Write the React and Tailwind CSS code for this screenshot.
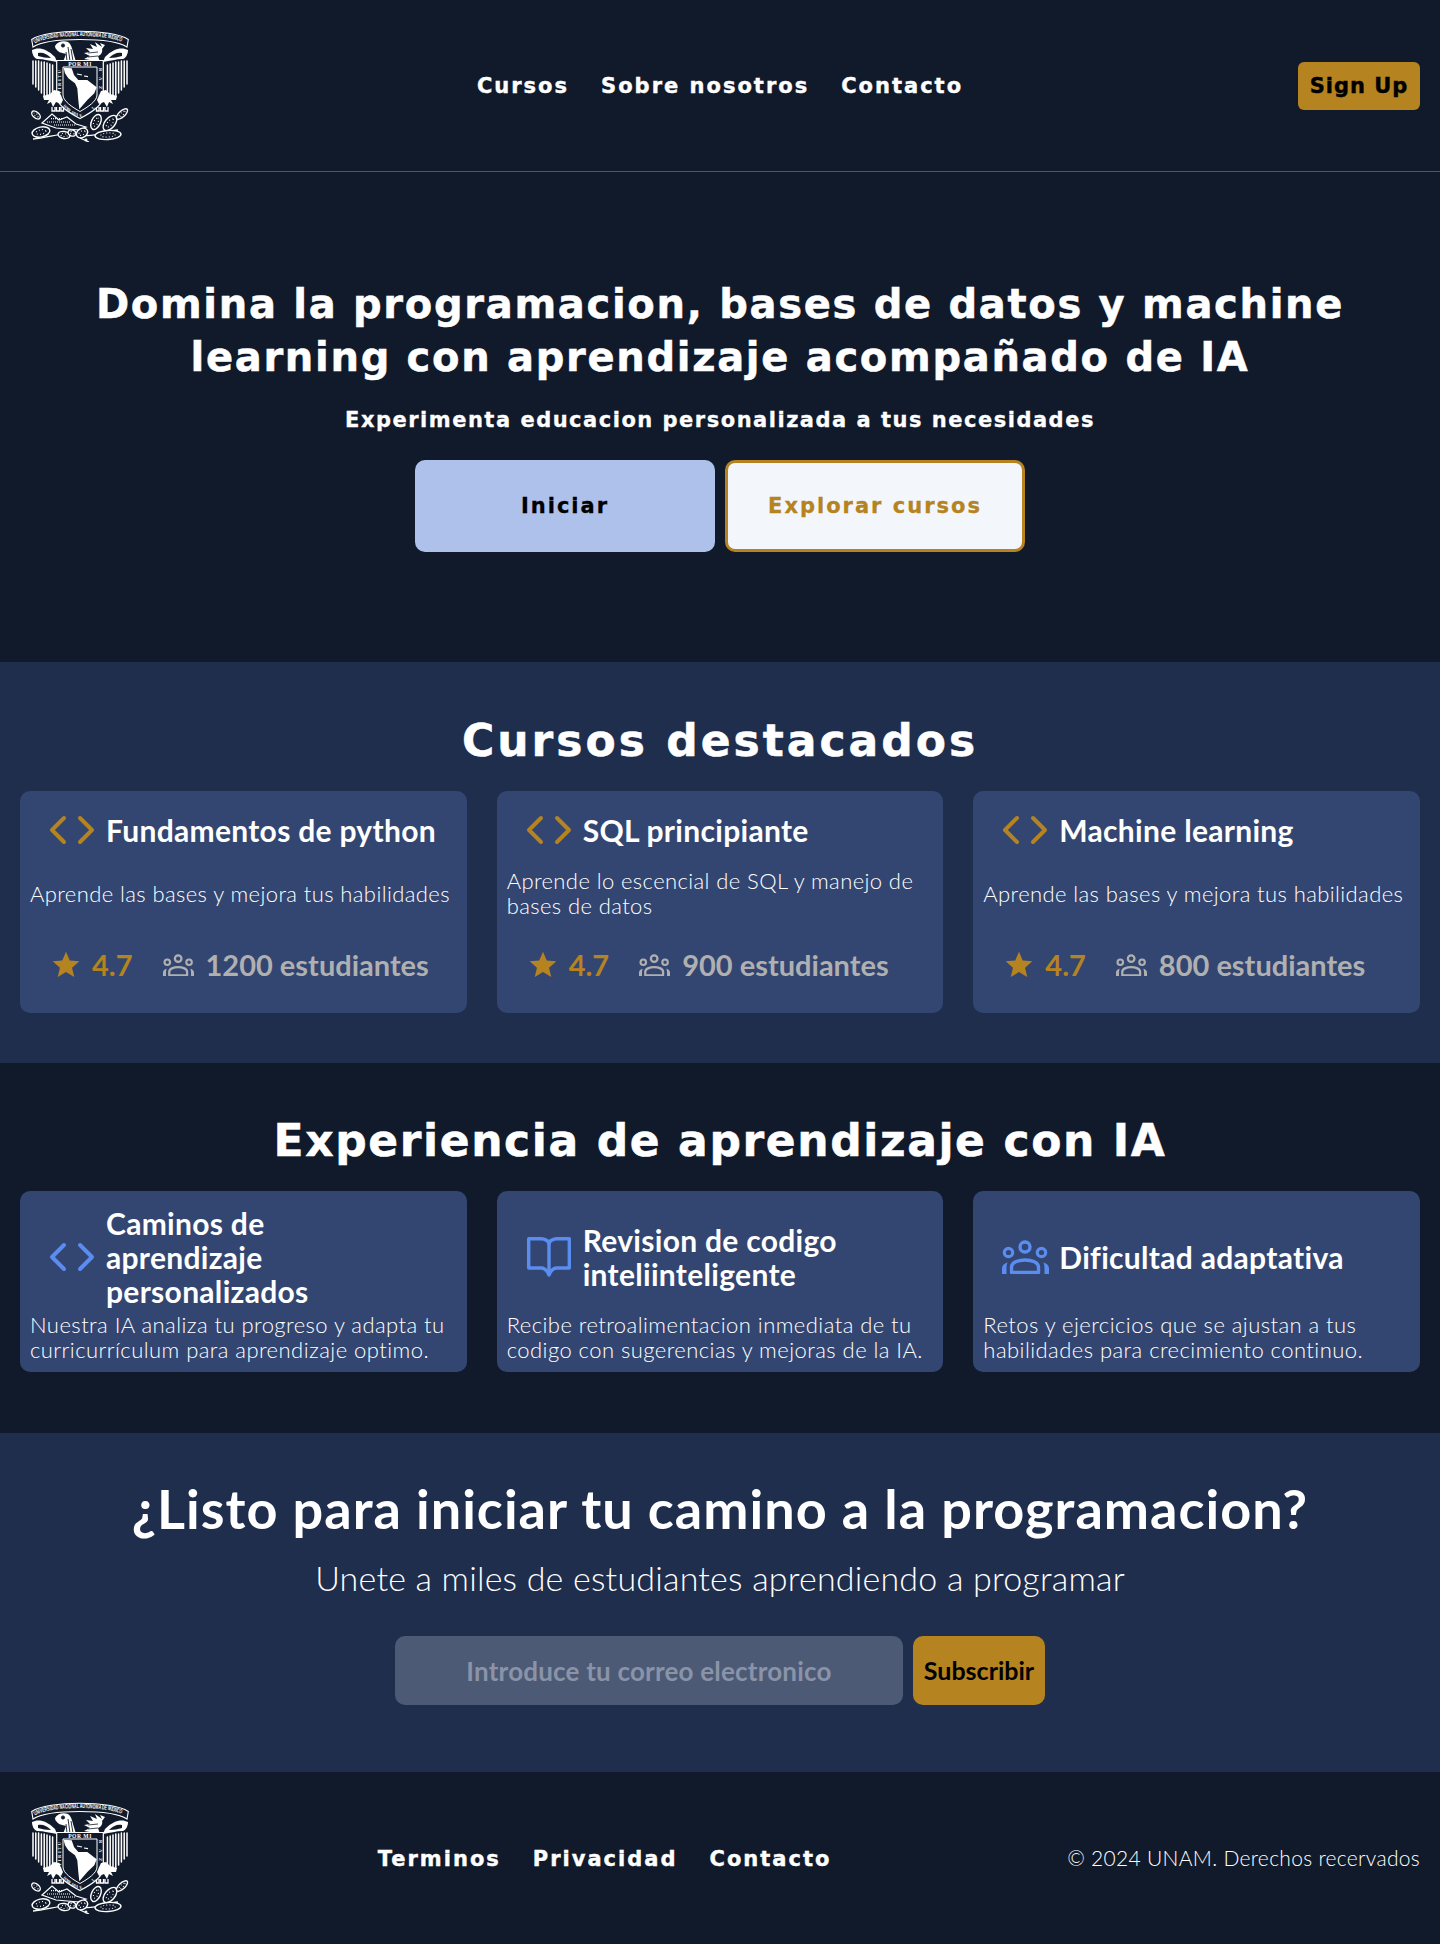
import React from "react";
import { Code } from "lucide-react";
import { MdStar } from "react-icons/md";

const HEAD = { fontFamily: '"DejaVu Sans", sans-serif' };
const BODY = { fontFamily: 'Lato, "Liberation Sans", sans-serif' };
const SERIF = '"Liberation Serif", serif';
const COND = '"Liberation Sans", sans-serif';

function Pad({ cx, cy, rx, ry, r = 0 }) {
  return (
    <g transform={`rotate(${r} ${cx} ${cy})`}>
      <ellipse cx={cx} cy={cy} rx={rx} ry={ry} stroke="#fff" strokeWidth="1.4" fill="#111a2a" />
      <ellipse cx={cx} cy={cy} rx={rx * 0.55} ry={ry * 0.45} stroke="#fff" strokeWidth="1.1" strokeDasharray="0.9 2.2" fill="none" />
    </g>
  );
}

function Crest({ id }) {
  return (
    <svg width="100" height="112" viewBox="0 0 100 112" fill="none" className="block">
      <defs>
        <path id={`arc-${id}`} d="M5 13.5C20 3.6 80 3.6 95 13.5" />
        <path id={`left-${id}`} d="M31 72V38" />
        <path id={`right-${id}`} d="M69 38V72" />
        <path id={`bl-${id}`} d="M33 76C38 82 44 85 50 87" />
        <path id={`br-${id}`} d="M50 87C56 85 62 82 67 76" />
      </defs>
      <path d="M1.7 9.5C18 -1.5 82 -1.5 98.3 9.5L97 17C82 7 18 7 3 17Z" stroke="#fff" strokeWidth="1.1" />
      <text fill="#fff" fontFamily={COND} fontSize="6.2" fontWeight="700">
        <textPath href={`#arc-${id}`} textLength="88" lengthAdjust="spacingAndGlyphs">UNIVERSIDAD NACIONAL AUTONOMA DE MEXICO</textPath>
      </text>

      <path d="M2 20C8 17 16 18 25 27L27 32C20 31 14 29 7 29C4 28 2 24 2 20Z" fill="#fff" />
      <path d="M98 20C92 17 84 18 75 27L73 32C80 31 86 29 93 29C96 28 98 24 98 20Z" fill="#fff" />
      <path d="M8 23C13 22 17 24 21 28C16 28 12 27 8 26Z" fill="#111a2a" />
      <path d="M92 23C87 22 83 24 79 28C84 28 88 27 92 26Z" fill="#111a2a" />

      <g stroke="#fff" strokeWidth="1.5" strokeLinecap="round">
        <path d="M3 31V54M5.8 31V57M8.6 31V60M11.4 32V63M14.2 32V66M17 33V68M19.8 34V68M22.6 35V64" />
        <path d="M97 31V54M94.2 31V57M91.4 31V60M88.6 32V63M85.8 32V66M83 33V68M80.2 34V68M77.4 35V64" />
      </g>

      <path d="M25 16C27 12 33 10 38 12C41 14 42 18 43 22L46 32H33L36 24C32 23 28 22 27 20C26 19 25 18 25 16Z" fill="#fff" />
      <g stroke="#111a2a" strokeWidth="0.9">
        <path d="M38 17L40 31M41 19L43 31M36 22L37 31" />
        <circle cx="33" cy="15.5" r="1.6" fill="#111a2a" />
      </g>
      <path d="M75 15L70 13L72 17L65 12L67 17L60 14L63 19L56 18L60 22L54 23L60 26L54 29L60 30L55 32H70L68 26C71 25 73 22 72 19Z" fill="#fff" />
      <g stroke="#111a2a" strokeWidth="0.8">
        <path d="M58 23L68 22M58 27L68 26" />
      </g>

      <path d="M26.7 30.5H73.3V66C73.3 75 62 82 50 88.5C38 82 26.7 75 26.7 66Z" fill="#111a2a" stroke="#fff" strokeWidth="1.2" />
      <path d="M33 37H67V65C67 71 58 77 50 81.5C42 77 33 71 33 65Z" fill="#111a2a" stroke="#fff" strokeWidth="1" />
      <text x="50" y="35.6" textAnchor="middle" fill="#fff" fontFamily={SERIF} fontSize="5.6" fontWeight="700" letterSpacing="0.5">POR MI</text>
      <text fill="#fff" fontFamily={SERIF} fontSize="4.6" fontWeight="700">
        <textPath href={`#left-${id}`} textLength="32">ESPIRITU</textPath>
      </text>
      <text fill="#fff" fontFamily={SERIF} fontSize="4.6" fontWeight="700">
        <textPath href={`#right-${id}`} textLength="30">RAZA</textPath>
      </text>
      <text fill="#fff" fontFamily={SERIF} fontSize="4" fontWeight="700">
        <textPath href={`#bl-${id}`} textLength="18">HABLARA</textPath>
      </text>
      <text fill="#fff" fontFamily={SERIF} fontSize="4" fontWeight="700">
        <textPath href={`#br-${id}`} textLength="18">EL</textPath>
      </text>
      <path d="M33.6 37.7L41.7 38.3L44 45L48.3 50L57.3 50L66.7 57.3L64.3 63.3L57.3 70L49.3 79.3L48.3 70L47.3 58.3L45 53.3L38.3 48.3L35 43.3Z" fill="#fff" />
      <path d="M47 44L52 45M54 46L58 46.6" stroke="#fff" strokeWidth="1.2" />

      <g fill="#fff">
        <path d="M13 66L20 64L24 60L29 61L33 70L31 74L26 72L23 77L21 72L17 74L19 70L14 70Z" />
        <path d="M87 66L80 64L76 60L71 61L67 70L69 74L74 72L77 77L79 72L83 74L81 70L86 70Z" />
      </g>
      <g stroke="#fff" strokeWidth="1.3">
        <path d="M22 77V81H25V77M26.5 77V81H29.5V77M31 77V81H33.5V77" />
        <path d="M78 77V81H75V77M73.5 77V81H70.5V77M69 77V81H66.5V77" />
      </g>

      <path d="M12 93L22 84L29 90L37 87L46 94L56 97L49 100L26 98Z" stroke="#fff" strokeWidth="1.2" fill="#111a2a" />
      <path d="M17 92H40M21 88.6H32M24 95H46" stroke="#fff" strokeWidth="1.2" strokeDasharray="1 1" />
      <path d="M3 109C20 108 36 100 52 105C64 108 78 100 88 100" stroke="#fff" strokeWidth="1.3" />
      <Pad cx={11} cy={102} rx={9} ry={5} r={-12} />
      <Pad cx={6} cy={85} rx={5} ry={3} r={40} />
      <Pad cx={34} cy={105} rx={6} ry={3.5} r={10} />
      <Pad cx={52} cy={103} rx={6} ry={4.5} r={-30} />
      <Pad cx={66} cy={92} rx={8} ry={4.5} r={-65} />
      <Pad cx={80} cy={93} rx={9} ry={5} r={-50} />
      <Pad cx={78} cy={105} rx={13} ry={4.5} r={-4} />
      <Pad cx={92} cy={84} rx={7} ry={3} r={-42} />
      <Pad cx={42} cy={103} rx={4} ry={3} r={20} />
      <circle cx="56" cy="110" r="1.4" fill="#fff" />
      <path d="M50 108L59 112" stroke="#fff" strokeWidth="1.3" />
    </svg>
  );
}

function GroupIcon({ width }) {
  return (
    <svg width={width} viewBox="0 0 47 34" fill="currentColor" className="shrink-0">
      <circle cx="23" cy="7" r="5" fill="none" stroke="currentColor" strokeWidth="3.4" />
      <circle cx="6.5" cy="12.5" r="4.2" fill="none" stroke="currentColor" strokeWidth="3.2" />
      <circle cx="39.5" cy="12.5" r="4.2" fill="none" stroke="currentColor" strokeWidth="3.2" />
      <path d="M9.5 32.4V27C9.5 22.5 16 20 23 20C30 20 36.5 22.5 36.5 27V32.4Z" fill="none" stroke="currentColor" strokeWidth="3.4" strokeLinejoin="round" />
      <path d="M0 34V28.5C0 25.5 2 23.5 5.5 22.5C5 24 4.5 26 4.5 28V34Z" />
      <path d="M47 34V28.5C47 25.5 45 23.5 41.5 22.5C42 24 42.5 26 42.5 28V34Z" />
    </svg>
  );
}

function BookIcon() {
  return (
    <svg width="44" height="40" viewBox="0 0 44 40" fill="none" stroke="currentColor" strokeWidth="3.4" strokeLinejoin="round" strokeLinecap="round" className="mx-auto">
      <path d="M1.7 1.7H14C18 1.7 22 4 22 7C22 4 26 1.7 30 1.7H42.3V31H30C26 31 24 33 22 38C20 33 18 31 14 31H1.7Z" />
      <path d="M22 7V36" />
    </svg>
  );
}

function Head({ children, className = "" }) {
  return (
    <h2 style={HEAD} className={"text-white font-bold text-center [-webkit-text-stroke:0.5px] " + className}>{children}</h2>
  );
}

function CourseCard({ title, desc, rating = "4.7", students }) {
  return (
    <div className="h-[222px] rounded-[10px] bg-[#334672] px-[10px]">
      <div className="flex items-center gap-[10px] pl-[18px] pt-[14px] h-[64px]">
        <Code size={48} strokeWidth={2} className="text-[#b5831f] shrink-0" />
        <span className="text-white text-[30px] tracking-[0.3px] font-bold whitespace-nowrap">{title}</span>
      </div>
      <div className="h-[76px] flex items-center">
        <p className="text-white text-[22px] tracking-[0.4px] leading-[25px] font-light">{desc}</p>
      </div>
      <div className="flex items-center pl-[20px] gap-[30px] h-[68px] text-[29px] font-bold">
        <span className="flex items-center gap-[10px] text-[#b5831f]">
          <MdStar size={32} />
          {rating}
        </span>
        <span className="flex items-center gap-[12px] text-[#b0b0b0]">
          <GroupIcon width={31} />
          {students} estudiantes
        </span>
      </div>
    </div>
  );
}

function FeatureCard({ icon, title, desc }) {
  return (
    <div className="h-[181px] rounded-[10px] bg-[#334672] px-[10px] pt-[15px]">
      <div className="h-[102px] flex items-center gap-[10px] pl-[18px]">
        <span className="w-[48px] flex justify-center text-[#5b8cf0] shrink-0">{icon}</span>
        <span className="text-white text-[30px] tracking-[0.3px] leading-[34px] font-bold max-w-[300px]">{title}</span>
      </div>
      <p className="text-white text-[22px] tracking-[0.45px] leading-[25px] font-light mt-[4px]">{desc}</p>
    </div>
  );
}

export default function App() {
  return (
    <div style={BODY} className="w-[1440px] min-h-[1944px] bg-[#111a2a] text-white">
      <header className="h-[172px] flex items-center justify-between px-[20px] border-b border-[#50555f]">
        <div className="pl-[10px] w-[300px]"><Crest id="a" /></div>
        <nav style={HEAD} className="flex gap-[32px] pt-[3px] text-[21px] tracking-[2px] font-bold [-webkit-text-stroke:0.4px]">
          <a>Cursos</a>
          <a>Sobre nosotros</a>
          <a>Contacto</a>
        </nav>
        <div className="w-[300px] flex justify-end">
          <button style={HEAD} className="w-[122px] h-[48px] pt-[2px] rounded-[6px] bg-[#b5831f] text-black text-[21px] tracking-[1px] font-bold [-webkit-text-stroke:0.4px]">Sign Up</button>
        </div>
      </header>

      <section className="h-[490px] flex flex-col items-center pt-[106px]">
        <Head className="text-[40px] tracking-[1.7px] leading-[53px] w-[1300px]">
          Domina la programacion, bases de datos y machine learning con aprendizaje acompañado de IA
        </Head>
        <p style={HEAD} className="text-[21px] tracking-[1.5px] leading-[30px] font-bold mt-[21px] [-webkit-text-stroke:0.3px]">Experimenta educacion personalizada a tus necesidades</p>
        <div className="flex gap-[10px] mt-[25px]">
          <button style={HEAD} className="w-[300px] h-[92px] pt-[2px] rounded-[10px] bg-[#adc1eb] text-black text-[21px] tracking-[2px] font-bold [-webkit-text-stroke:0.3px]">Iniciar</button>
          <button style={HEAD} className="w-[300px] h-[92px] pt-[2px] rounded-[10px] bg-[#f3f7fc] border-[3px] border-[#b5831f] text-[#b5831f] text-[21px] tracking-[2px] font-bold [-webkit-text-stroke:0.3px]">Explorar cursos</button>
        </div>
      </section>

      <section className="h-[401px] bg-[#1f2e4d] flex flex-col px-[20px] pt-[50px]">
        <Head className="text-[44px] tracking-[3px] leading-[58px]">Cursos destacados</Head>
        <div className="grid grid-cols-3 gap-[30px] mt-[21px]">
          <CourseCard title="Fundamentos de python" desc="Aprende las bases y mejora tus habilidades" students="1200" />
          <CourseCard title="SQL principiante" desc="Aprende lo escencial de SQL y manejo de bases de datos" students="900" />
          <CourseCard title="Machine learning" desc="Aprende las bases y mejora tus habilidades" students="800" />
        </div>
      </section>

      <section className="h-[370px] flex flex-col px-[20px] pt-[49px]">
        <Head className="text-[44px] tracking-[1.6px] leading-[58px]">Experiencia de aprendizaje con IA</Head>
        <div className="grid grid-cols-3 gap-[30px] mt-[21px]">
          <FeatureCard icon={<Code size={48} strokeWidth={2} />} title="Caminos de aprendizaje personalizados" desc="Nuestra IA analiza tu progreso y adapta tu curricurrículum para aprendizaje optimo." />
          <FeatureCard icon={<BookIcon />} title="Revision de codigo inteliinteligente" desc="Recibe retroalimentacion inmediata de tu codigo con sugerencias y mejoras de la IA." />
          <FeatureCard icon={<GroupIcon width={47} />} title="Dificultad adaptativa" desc="Retos y ejercicios que se ajustan a tus habilidades para crecimiento continuo." />
        </div>
      </section>

      <section className="h-[339px] bg-[#1f2e4d] flex flex-col items-center pt-[46px]">
        <h2 className="text-[54px] tracking-[1px] leading-[60px] font-bold">¿Listo para iniciar tu camino a la programacion?</h2>
        <p className="text-[34px] tracking-[0.2px] leading-[40px] font-light mt-[19px]">Unete a miles de estudiantes aprendiendo a programar</p>
        <div className="flex gap-[10px] mt-[38px]">
          <input readOnly placeholder="Introduce tu correo electronico" className="w-[508px] h-[69px] rounded-[10px] bg-[#4c5a76] text-center text-[26px] tracking-[0.2px] font-bold placeholder:text-[#8a93a8] outline-none" />
          <button className="w-[132px] h-[69px] rounded-[10px] bg-[#b5831f] text-black text-[25px] font-bold">Subscribir</button>
        </div>
      </section>

      <footer className="h-[172px] flex items-center justify-between px-[20px]">
        <div className="pl-[10px]"><Crest id="b" /></div>
        <nav style={HEAD} className="flex gap-[32px] pt-[3px] pl-[12px] text-[21px] tracking-[2px] font-bold [-webkit-text-stroke:0.4px]">
          <a>Terminos</a>
          <a>Privacidad</a>
          <a>Contacto</a>
        </nav>
        <p className="text-[21px] tracking-[0.3px] font-light">© 2024 UNAM. Derechos recervados</p>
      </footer>
    </div>
  );
}
